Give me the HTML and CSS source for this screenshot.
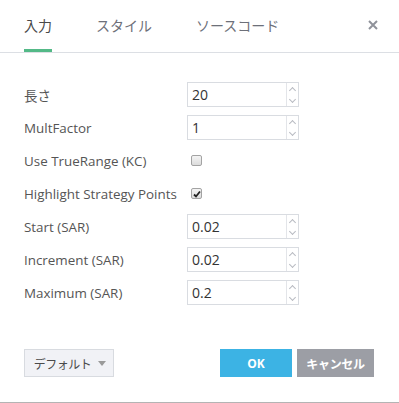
FILE: index.html
```html
<!DOCTYPE html>
<html lang="ja">
<head>
    <meta charset="UTF-8">
    <meta name="viewport" content="width=device-width, initial-scale=1.0">
    <title>入力</title>
    <link rel="stylesheet" href="styles.css">
</head>
<body>
    <div class="dialog">
        <div class="header">
            <div class="tab active">入力</div>
            <div class="tab">スタイル</div>
            <div class="tab">ソースコード</div>
            <div class="close">
                <svg width="10" height="10" viewBox="0 0 10 10"><path d="M1 1L9 9M9 1L1 9" stroke="#8f929a" stroke-width="2"/></svg>
            </div>
        </div>
        <div class="content">
            <div class="row">
                <div class="label">長さ</div>
                <div class="field"><span class="value">20</span><span class="spin"><i class="up"></i><i class="down"></i></span></div>
            </div>
            <div class="row">
                <div class="label">MultFactor</div>
                <div class="field"><span class="value">1</span><span class="spin"><i class="up"></i><i class="down"></i></span></div>
            </div>
            <div class="row">
                <div class="label">Use TrueRange (KC)</div>
                <div class="check"></div>
            </div>
            <div class="row">
                <div class="label">Highlight Strategy Points</div>
                <div class="check checked">
                    <svg width="8" height="8" viewBox="0 0 8 8"><path d="M1 4.5L3 6.5L7 1.5" fill="none" stroke="#222" stroke-width="1.8"/></svg>
                </div>
            </div>
            <div class="row">
                <div class="label">Start (SAR)</div>
                <div class="field"><span class="value">0.02</span><span class="spin"><i class="up"></i><i class="down"></i></span></div>
            </div>
            <div class="row">
                <div class="label">Increment (SAR)</div>
                <div class="field"><span class="value">0.02</span><span class="spin"><i class="up"></i><i class="down"></i></span></div>
            </div>
            <div class="row">
                <div class="label">Maximum (SAR)</div>
                <div class="field"><span class="value">0.2</span><span class="spin"><i class="up"></i><i class="down"></i></span></div>
            </div>
        </div>
        <div class="footer">
            <button class="btn-default">デフォルト <span class="caret"></span></button>
            <div class="actions">
                <button class="btn-ok">OK</button>
                <button class="btn-cancel">キャンセル</button>
            </div>
        </div>
    </div>
</body>
</html>
```

FILE: styles.css
```css
* {
    box-sizing: border-box;
}
body {
    margin: 0;
    background: white;
    font-family: "Open Sans", "Noto Sans CJK JP", sans-serif;
    color: #4a4a4a;
}
.dialog {
    width: 399px;
    height: 403px;
    border-bottom: 1px solid #b4b4b4;
    display: flex;
    flex-direction: column;
}
.header {
    height: 53px;
    border-bottom: 1px solid #dcdfe4;
    display: flex;
    align-items: center;
    padding-left: 24px;
    padding-bottom: 2px;
}
.tab {
    position: relative;
    font-family: "Noto Sans CJK JP", sans-serif;
    font-size: 14px;
    color: #6d7079;
    margin-right: 44px;
    height: 24px;
    line-height: 24px;
}
.tab.active {
    color: #4a4a4a;
}
.tab.active::after {
    content: "";
    position: absolute;
    left: 0;
    right: 0;
    bottom: -15px;
    height: 3px;
    background: #53b987;
}
.close {
    margin-left: auto;
    margin-right: 21px;
    display: flex;
}
.content {
    padding: 25px 0 0 24px;
}
.row {
    height: 33px;
    display: grid;
    grid-template-columns: 163px 112px;
    align-items: center;
}
.label {
    font-size: 13.4px;
    color: #555;
}
.field {
    height: 25px;
    border: 1px solid #d9dce1;
    display: flex;
}
.value {
    flex: 1;
    font-size: 14px;
    color: #333;
    padding-left: 4px;
    line-height: 23px;
}
.spin {
    width: 12px;
    border-left: 1px solid #e3e5e9;
    display: flex;
    flex-direction: column;
}
.spin i {
    flex: 1;
    position: relative;
}
.spin i::before {
    content: "";
    position: absolute;
    left: 3px;
    width: 4px;
    height: 4px;
    border-left: 1px solid #b8bbc2;
    border-top: 1px solid #b8bbc2;
}
.spin .up::before {
    top: 5px;
    transform: rotate(45deg);
}
.spin .down::before {
    top: 2px;
    transform: rotate(225deg);
}
.check {
    width: 11px;
    height: 11px;
    margin-left: 4px;
    border: 1px solid #a3a3a3;
    border-radius: 2px;
    background: linear-gradient(#f4f4f4, #dcdcdc);
    display: flex;
    align-items: center;
    justify-content: center;
}
.footer {
    margin-top: 40px;
    padding: 0 25px 0 24px;
    display: flex;
    justify-content: space-between;
}
.actions {
    display: flex;
    gap: 5px;
}
button {
    height: 28px;
    border: none;
    font-family: "Noto Sans CJK JP", sans-serif;
    cursor: pointer;
}
.btn-default {
    width: 90px;
    background: #f1f2f6;
    border: 1px solid #d8dbe0;
    color: #4a4a4a;
    font-size: 12px;
    letter-spacing: -0.5px;
    padding: 0 0 0 2px;
    display: flex;
    align-items: center;
    justify-content: center;
    gap: 7px;
}
.caret {
    width: 0;
    height: 0;
    border-left: 4px solid transparent;
    border-right: 4px solid transparent;
    border-top: 5px solid #9a9a9a;
}
.btn-ok {
    width: 72px;
    background: #3cb3e4;
    color: white;
    font-family: "Open Sans", sans-serif;
    font-weight: bold;
    font-size: 12px;
}
.btn-cancel {
    width: 77px;
    background: #9c9ea5;
    color: white;
    font-weight: bold;
    font-size: 12px;
    letter-spacing: -0.3px;
}
```
